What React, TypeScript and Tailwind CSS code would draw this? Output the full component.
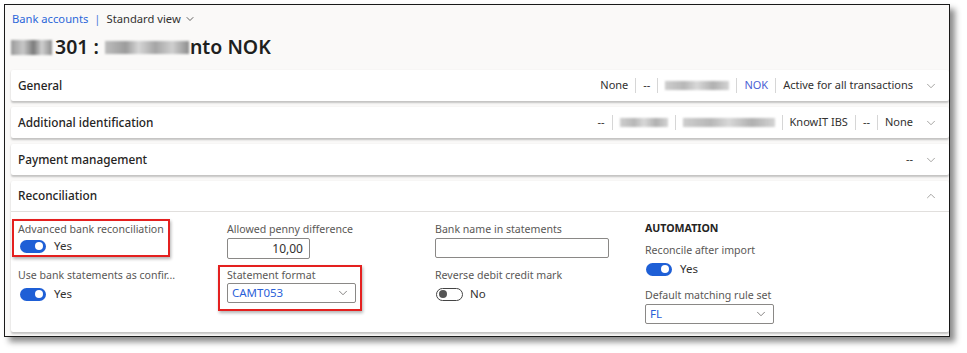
import { ChevronDown, ChevronUp } from 'lucide-react'

function Sep() {
  return <span className="mx-[7px] h-[15px] w-px bg-[#d6d6d6]" />
}

function Blur({ w }: { w: number }) {
  return (
    <span
      className="inline-block h-[9px] bg-[linear-gradient(90deg,#c8c8c8,#b0b0b0_30%,#d4d4d4_50%,#a8a8a8_75%,#cfcfcf)] blur-[1px] opacity-90"
      style={{ width: w }}
    />
  )
}

function Toggle({ on }: { on: boolean }) {
  if (on) {
    return (
      <span className="flex h-[13px] w-[26px] items-center justify-end rounded-full bg-[#1e5fd6] pr-[3px]">
        <span className="h-[8px] w-[8px] rounded-full bg-white" />
      </span>
    )
  }
  return (
    <span className="flex h-[13px] w-[27px] items-center rounded-full border border-[#444] pl-[2px]">
      <span className="h-[8px] w-[8px] rounded-full bg-[#555]" />
    </span>
  )
}

function Label({ children }: { children: React.ReactNode }) {
  return <div className="h-[14px] text-[10.6px] leading-[14px] text-[#5a5856] whitespace-nowrap">{children}</div>
}

function Section({ title, children }: { title: string; children?: React.ReactNode }) {
  return (
    <div className="flex h-[31px] items-center rounded-[2px] bg-white pl-[7px] pr-[11px] shadow-[0_1.5px_2px_rgba(0,0,0,0.22)]">
      <span className="text-[11.8px] font-medium text-[#252423]">{title}</span>
      <div className="ml-auto flex items-center text-[11px] text-[#323130]">{children}</div>
      <ChevronDown className="ml-[11px] h-[14px] w-[14px] text-[#8a8886]" strokeWidth={1.3} />
    </div>
  )
}

export default function App() {
  return (
    <div className="h-[353px] w-[967px] bg-white pl-[4px] pt-[4px] font-['Noto_Sans',sans-serif]">
      <div className="h-[333px] w-[946px] border border-[#1a1a1a] bg-[#faf9f8] pl-[6px] pt-[4px] shadow-[5px_5px_6px_rgba(0,0,0,0.45)]">
        <div className="flex h-[20px] items-center pl-[1px] text-[11.2px] leading-none">
          <span className="text-[#2b67d9]">Bank accounts</span>
          <span className="mx-[6px] text-[#4a7bd8]">|</span>
          <span className="text-[#323130]">Standard view</span>
          <ChevronDown className="ml-[3px] h-[12px] w-[12px] text-[#323130]" strokeWidth={1.5} />
        </div>

        <div className="mt-[4px] flex h-[28px] items-center text-[19.5px] font-semibold text-[#201f1e]">
          <span className="mr-[3px] inline-block h-[15px] w-[41px] bg-[linear-gradient(90deg,#9a9a9a,#c8c8c8_30%,#7b7b7b_55%,#d0d0d0_75%,#8d8d8d)] blur-[1px]" />
          <span>301 :</span>
          <span className="ml-[6px] mr-[1px] inline-block h-[13px] w-[84px] bg-[linear-gradient(90deg,#bdbdbd,#9c9c9c_25%,#d6d6d6_40%,#a5a5a5_60%,#cfcfcf_80%,#8e8e8e)] blur-[1px]" />
          <span>nto NOK</span>
        </div>

        <div className="mt-[9px] flex flex-col gap-[6px]">
          <Section title="General">
            <span>None</span>
            <Sep />
            <span>--</span>
            <Sep />
            <Blur w={64} />
            <Sep />
            <span className="text-[#4b5fd4]">NOK</span>
            <Sep />
            <span>Active for all transactions</span>
          </Section>
          <Section title="Additional identification">
            <span>--</span>
            <Sep />
            <Blur w={48} />
            <Sep />
            <Blur w={92} />
            <Sep />
            <span>KnowIT IBS</span>
            <Sep />
            <span>--</span>
            <Sep />
            <span>None</span>
          </Section>
          <Section title="Payment management">
            <span>--</span>
          </Section>

          <div className="rounded-[2px] bg-white shadow-[0_1.5px_2px_rgba(0,0,0,0.22)]">
            <div className="flex h-[31px] items-center border-b border-[#e1dfdd] pl-[7px] pr-[11px]">
              <span className="text-[11.8px] font-medium text-[#252423]">Reconciliation</span>
              <ChevronUp className="ml-auto h-[14px] w-[14px] text-[#8a8886]" strokeWidth={1.3} />
            </div>

            <div className="grid h-[120px] grid-cols-[209px_208px_210px_1fr] items-start px-[7px] text-[11.5px] text-[#323130]">
              <div className="flex flex-col pt-[10px]">
                <div className="relative">
                  <div className="absolute -left-[6px] -top-[3px] h-[38px] w-[158px] border-2 border-[#e4201f] shadow-[1px_2px_3px_rgba(0,0,0,0.3)]" />
                  <Label>Advanced bank reconciliation</Label>
                  <div className="flex h-[20px] items-center gap-[8px] pl-[2px]">
                    <Toggle on />
                    <span>Yes</span>
                  </div>
                </div>
                <div className="mt-[12px]">
                  <Label>Use bank statements as confir...</Label>
                </div>
                <div className="mt-[2px] flex h-[20px] items-center gap-[8px] pl-[2px]">
                  <Toggle on />
                  <span>Yes</span>
                </div>
              </div>

              <div className="flex flex-col pt-[10px]">
                <Label>Allowed penny difference</Label>
                <div className="mt-[2px] flex h-[21px] w-[83px] items-center justify-end rounded-[2px] border border-[#8a8886] pr-[6px] text-[12px]">
                  10,00
                </div>
                <div className="relative mt-[9px]">
                  <div className="absolute -left-[9px] -top-[3px] h-[46px] w-[144px] border-2 border-[#e4201f] shadow-[1px_2px_3px_rgba(0,0,0,0.3)]" />
                  <Label>Statement format</Label>
                  <div className="mt-[1px] flex h-[20px] w-[129px] items-center justify-between rounded-[2px] border border-[#8a8886] pl-[4px] pr-[5px]">
                    <span className="text-[#2b5fd8]">CAMT053</span>
                    <ChevronDown className="h-[14px] w-[14px] text-[#605e5c]" strokeWidth={1.3} />
                  </div>
                </div>
              </div>

              <div className="flex flex-col pt-[10px]">
                <Label>Bank name in statements</Label>
                <div className="mt-[2px] h-[20px] w-[174px] rounded-[2px] border border-[#8a8886]" />
                <div className="mt-[10px]">
                  <Label>Reverse debit credit mark</Label>
                </div>
                <div className="mt-[2px] flex h-[20px] items-center gap-[7px] pl-[1px]">
                  <Toggle on={false} />
                  <span>No</span>
                </div>
              </div>

              <div className="flex flex-col pt-[9px]">
                <div className="h-[14px] text-[10.6px] font-bold leading-[14px] text-[#252423]">AUTOMATION</div>
                <div className="mt-[8px]">
                  <Label>Reconcile after import</Label>
                </div>
                <div className="mt-[2px] flex h-[20px] items-center gap-[8px] pl-[1px]">
                  <Toggle on />
                  <span>Yes</span>
                </div>
                <div className="mt-[9px]">
                  <Label>Default matching rule set</Label>
                </div>
                <div className="mt-[2px] flex h-[20px] w-[129px] items-center justify-between rounded-[2px] border border-[#8a8886] pl-[4px] pr-[5px]">
                  <span className="text-[#2b5fd8]">FL</span>
                  <ChevronDown className="h-[14px] w-[14px] text-[#605e5c]" strokeWidth={1.3} />
                </div>
              </div>
            </div>
          </div>
        </div>
      </div>
    </div>
  )
}
